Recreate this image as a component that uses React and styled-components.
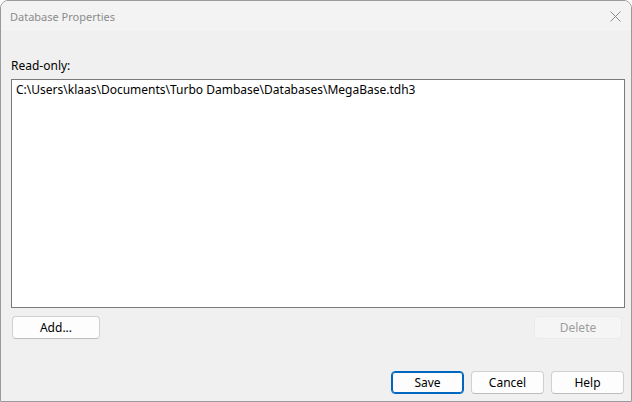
import * as React from "react";
import styled, { createGlobalStyle } from "styled-components";

const GlobalStyle = createGlobalStyle`
  html, body {
    margin: 0;
    padding: 0;
    background: #ffffff;
  }
  * {
    box-sizing: border-box;
  }
`;

const Window = styled.div`
  width: 632px;
  height: 402px;
  display: flex;
  flex-direction: column;
  border: 1px solid #9a9a9a;
  border-radius: 8px 8px 0 0;
  background: #f0f0f0;
  overflow: hidden;
  font-family: "Segoe UI", "Noto Sans", "Liberation Sans", sans-serif;
  font-size: 12px;
  color: #000;
`;

const TitleBar = styled.div`
  height: 30px;
  flex: none;
  display: flex;
  align-items: center;
  justify-content: space-between;
  padding: 0 9px 0 9px;
  background: #f3f3f3;
  color: #8c8c8c;
  font-size: 11px;
`;

const CloseButton = styled.div`
  width: 14px;
  height: 14px;
  display: flex;
  align-items: center;
  justify-content: center;
`;

const Body = styled.div`
  flex: 1;
  display: flex;
  flex-direction: column;
  padding: 27px 6px 7px 10px;
`;

const Label = styled.div`
  line-height: 16px;
  height: 16px;
  margin-bottom: 5px;
`;

const ListBox = styled.div`
  height: 229px;
  border: 1px solid #7a7a7a;
  background: #ffffff;
  padding: 2px 4px;
`;

const ListItem = styled.div`
  line-height: 16px;
`;

const ButtonRow = styled.div`
  display: flex;
  justify-content: space-between;
  align-items: center;
  margin-top: 8px;
  padding: 0 3px 0 1px;
`;

const FooterRow = styled.div`
  margin-top: auto;
  display: flex;
  justify-content: flex-end;
  gap: 7px;
  padding-right: 1px;
`;

const Button = styled.button`
  width: ${(p) => p.$width || 73}px;
  height: 23px;
  padding: 0;
  font: inherit;
  border-radius: 4px;
  border: 1px solid ${(p) => (p.$primary ? "#0067c0" : p.disabled ? "#eaeaea" : "#d0d0d0")};
  border-bottom-color: ${(p) => (p.$primary ? "#0067c0" : p.disabled ? "#eaeaea" : "#bdbdbd")};
  background: ${(p) => (p.disabled ? "#f5f5f5" : "#fdfdfd")};
  color: ${(p) => (p.disabled ? "#9d9d9d" : "#000")};
  box-shadow: ${(p) => (p.$primary ? "inset 0 0 0 1px #0067c0" : "none")};
`;

export default function App() {
  return (
    <>
      <GlobalStyle />
      <Window>
        <TitleBar>
          <span>Database Properties</span>
          <CloseButton>
            <svg width="11" height="11" viewBox="0 0 11 11">
              <path d="M0.5 0.5 L10.5 10.5 M10.5 0.5 L0.5 10.5" stroke="#8a8a8a" strokeWidth="1" />
            </svg>
          </CloseButton>
        </TitleBar>
        <Body>
          <Label>Read-only:</Label>
          <ListBox>
            <ListItem>C:\Users\klaas\Documents\Turbo Dambase\Databases\MegaBase.tdh3</ListItem>
          </ListBox>
          <ButtonRow>
            <Button $width={88}>Add...</Button>
            <Button $width={88} disabled>
              Delete
            </Button>
          </ButtonRow>
          <FooterRow>
            <Button $primary>Save</Button>
            <Button>Cancel</Button>
            <Button>Help</Button>
          </FooterRow>
        </Body>
      </Window>
    </>
  );
}
